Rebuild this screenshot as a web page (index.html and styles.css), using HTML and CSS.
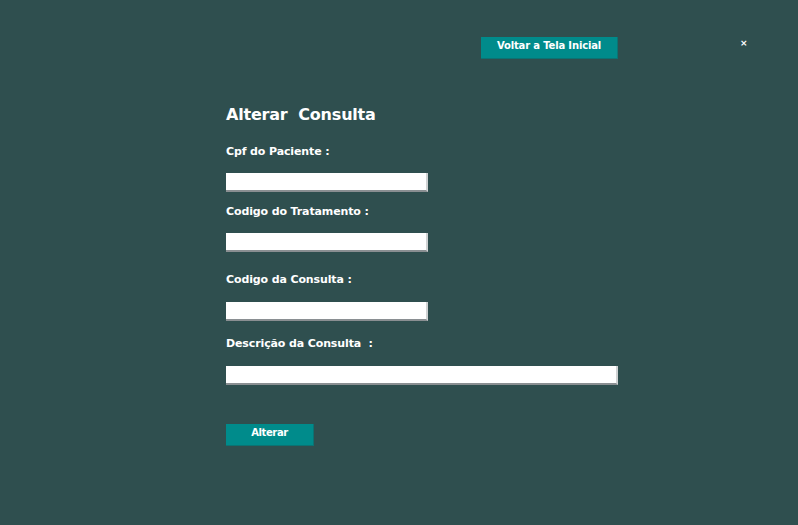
FILE: index.html
```html
<!DOCTYPE html>
<html lang="pt">
<head>
<meta charset="utf-8">
<title>Alterar Consulta</title>
<link rel="stylesheet" href="styles.css">
</head>
<body>
<div class="page">
  <div class="topbar">
    <button class="btn btn-back" type="button">Voltar a Tela Inicial</button>
    <span class="close">×</span>
  </div>
  <form class="form">
    <h1 class="title">Alterar&nbsp; Consulta</h1>
    <label class="label l1">Cpf do Paciente :</label>
    <input class="field f1" type="text">
    <label class="label l2">Codigo do Tratamento :</label>
    <input class="field f2" type="text">
    <label class="label l3">Codigo da Consulta :</label>
    <input class="field f3" type="text">
    <label class="label l4">Descrição da Consulta&nbsp; :</label>
    <input class="field field-wide f4" type="text">
    <button class="btn btn-submit" type="button">Alterar</button>
  </form>
</div>
</body>
</html>
```

FILE: styles.css
```css
html, body {
  margin: 0;
  padding: 0;
  background: #2f4f4f;
}
.page {
  width: 798px;
  height: 525px;
  background: #2f4f4f;
  font-family: "DejaVu Sans", sans-serif;
  color: #ffffff;
  overflow: hidden;
}
.topbar {
  display: flex;
  align-items: flex-start;
  padding-top: 37px;
  padding-left: 481px;
}
.btn {
  background: #008b8b;
  color: #ffffff;
  border: none;
  border-right: 1px solid #0b7373;
  border-bottom: 1px solid #0b7373;
  font-family: "DejaVu Sans", sans-serif;
  font-weight: bold;
  font-size: 10px;
  line-height: 12px;
  padding: 0;
  box-sizing: border-box;
  height: 22px;
  display: flex;
  align-items: flex-start;
  justify-content: center;
}
.btn-back {
  width: 137px;
  padding-top: 3px;
  letter-spacing: -0.15px;
}
.close {
  margin-left: 122px;
  margin-top: 1px;
  font-size: 9px;
  line-height: 11px;
  font-weight: bold;
}
.form {
  display: flex;
  flex-direction: column;
  align-items: flex-start;
  padding-left: 226px;
}
.title {
  margin: 46px 0 0 0;
  font-size: 16px;
  line-height: 19px;
  font-weight: bold;
  letter-spacing: -0.2px;
}
.label {
  font-size: 11px;
  line-height: 13px;
  font-weight: bold;
  letter-spacing: -0.12px;
}
.l1 { margin-top: 21px; }
.l2 { margin-top: 13px; }
.l3 { margin-top: 21px; }
.l4 { margin-top: 16px; }
.field {
  width: 202px;
  height: 19px;
  box-sizing: border-box;
  margin: 15px 0 0 0;
  padding: 0;
  background: #ffffff;
  border: none;
  border-bottom: 2px solid #8a8f92;
  border-right: 2px solid #cfd2d3;
  outline: none;
}
.f3, .f4 { margin-top: 16px; }
.field-wide { width: 392px; }
.btn-submit {
  width: 88px;
  margin-top: 39px;
  padding-top: 3px;
  letter-spacing: -0.4px;
}
```
